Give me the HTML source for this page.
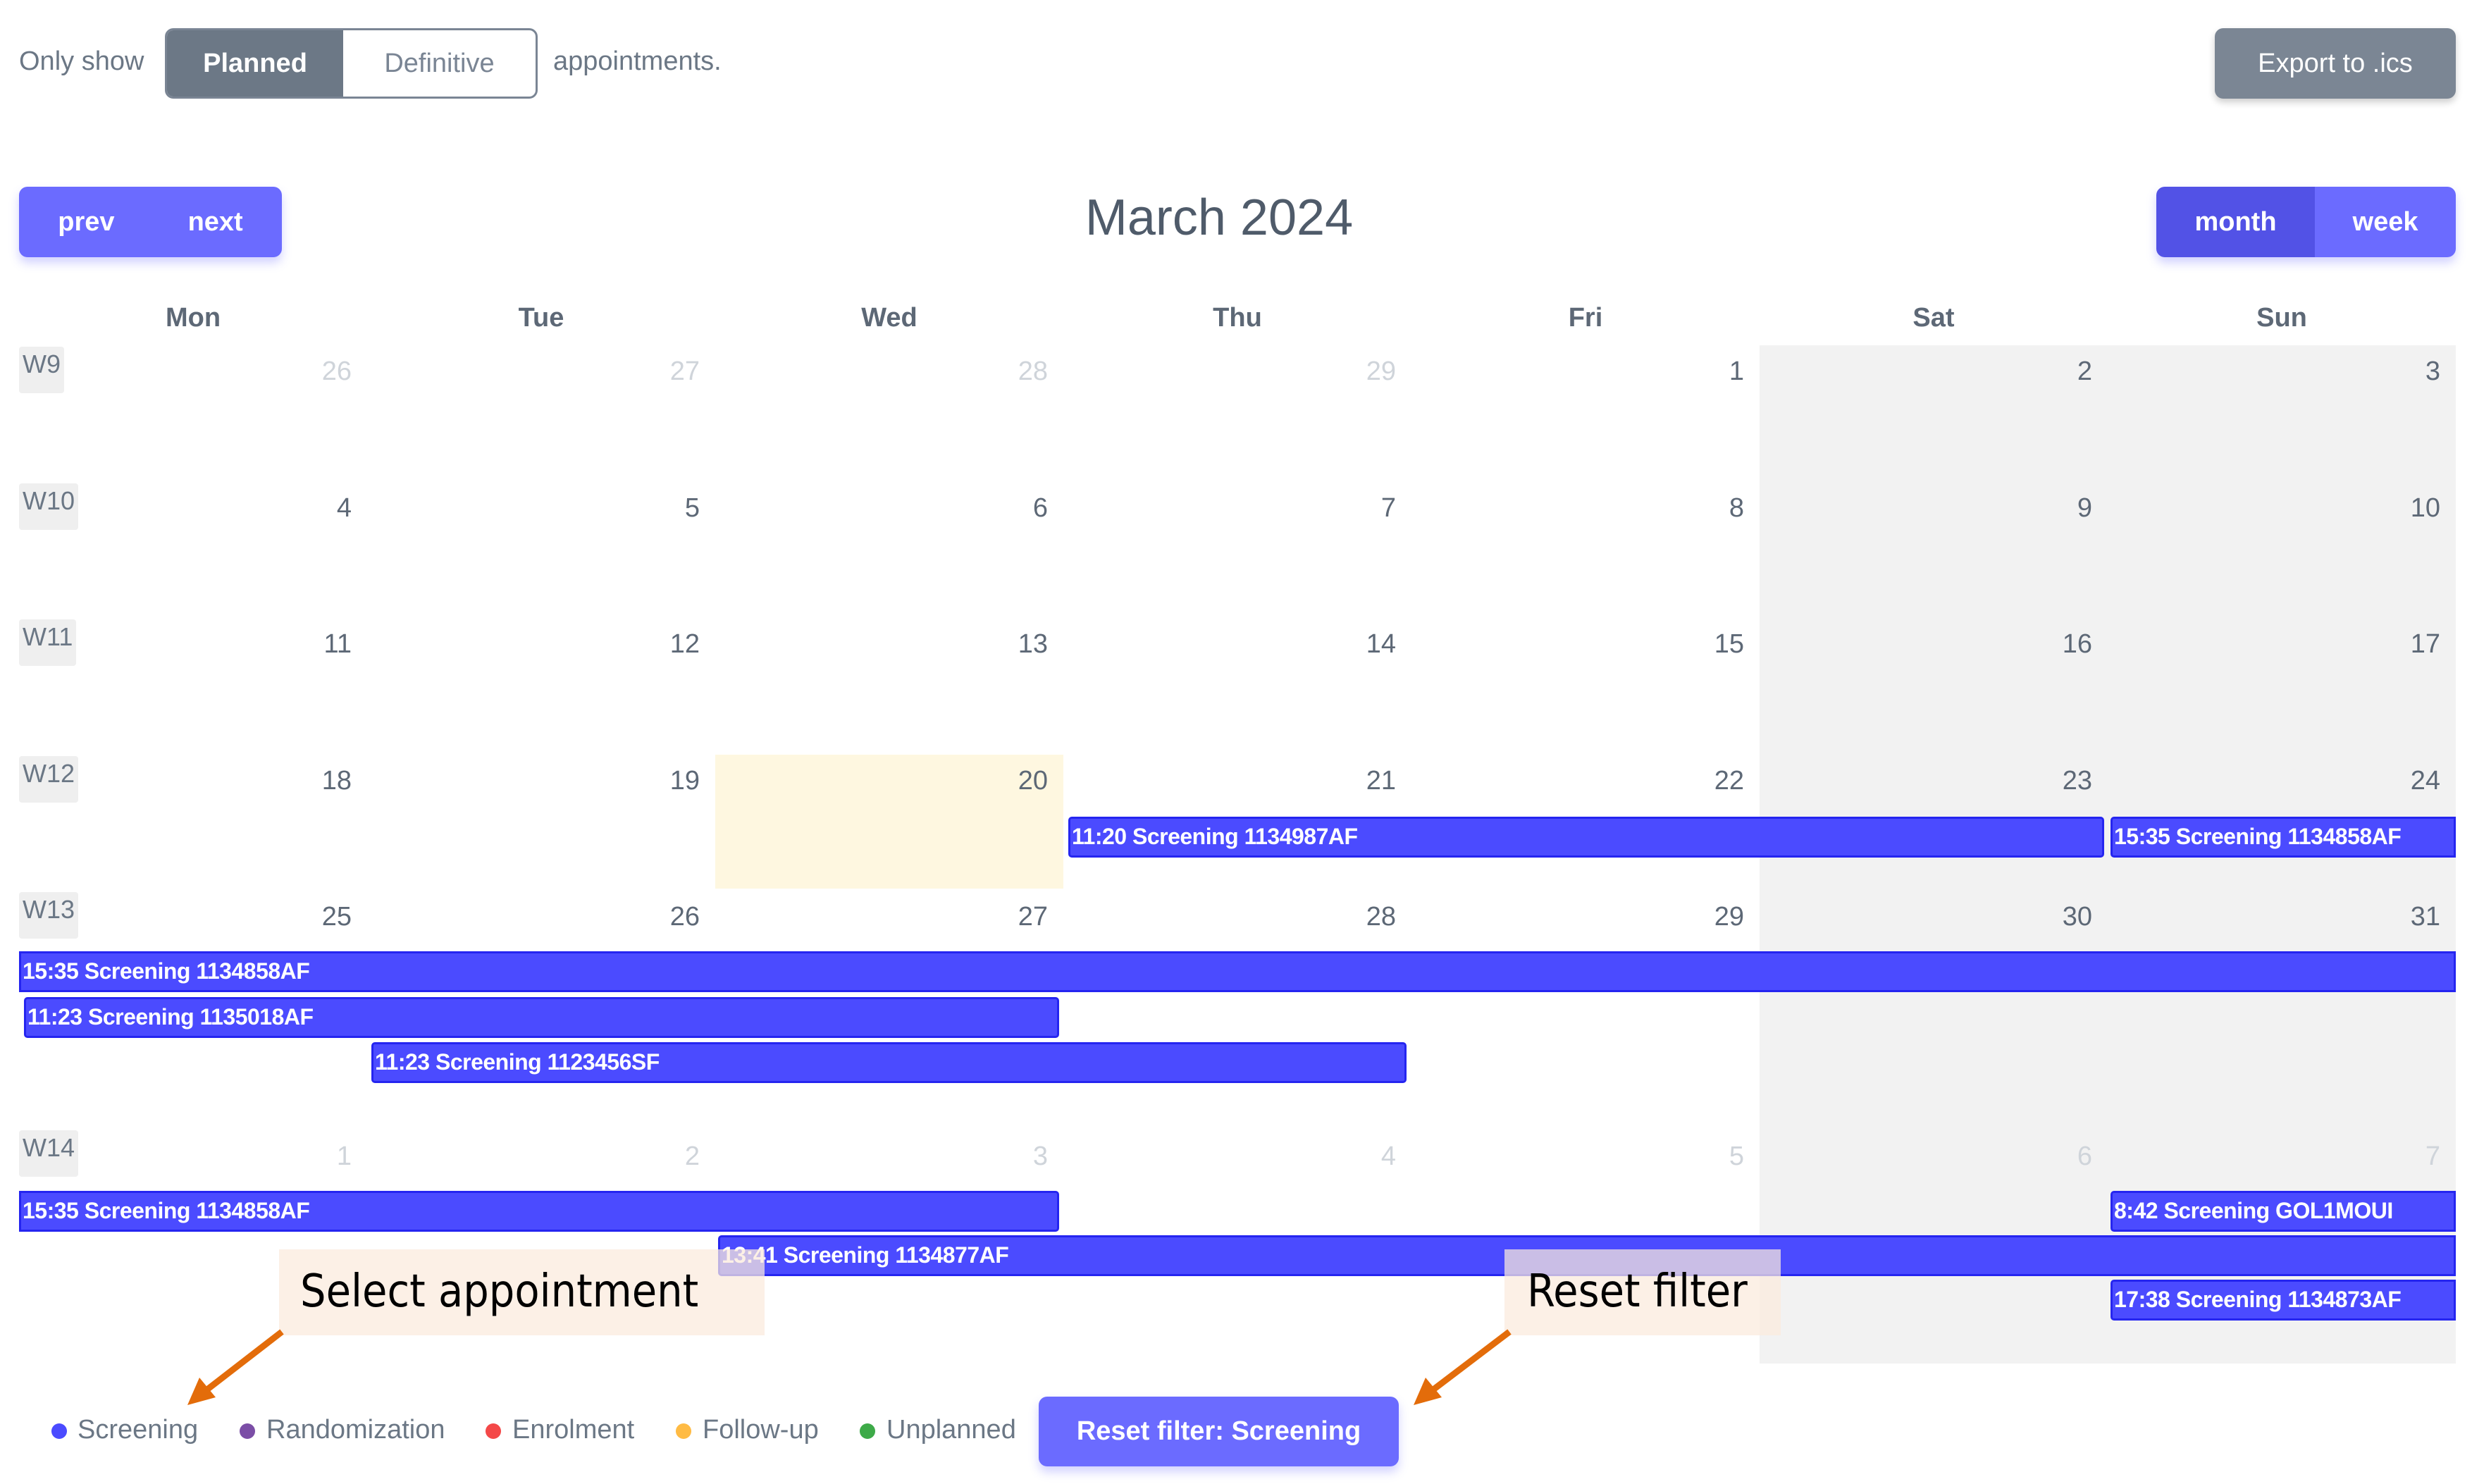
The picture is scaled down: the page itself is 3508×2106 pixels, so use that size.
<!DOCTYPE html>
<html><head><meta charset="utf-8"><style>
*{margin:0;padding:0;box-sizing:border-box}
body{width:3508px;height:2106px;background:#fff;position:relative;overflow:hidden;font-family:"Liberation Sans",sans-serif;color:#6b7785}
.a{position:absolute}
.t{font-size:38px;white-space:nowrap}
.btn{position:absolute;color:#fff;font-size:38px;font-weight:bold;display:flex;align-items:center;justify-content:center;border-radius:12px}
.dh{position:absolute;top:430px;width:494px;text-align:center;font-size:38px;font-weight:bold;color:#5d6876}
.wk{position:absolute;left:27px;height:66px;background:#efefef;font-size:36px;color:#6b7785;padding:4px 5px;border-radius:4px}
.dn{position:absolute;width:472px;text-align:right;font-size:38px;color:#5d6876}
.dn.o{color:#cfd4da}
.ev{position:absolute;height:58px;background:#4b4bff;border:3px solid #2525f0;border-radius:5px;color:#fff;font-size:32px;font-weight:bold;line-height:50px;padding-left:2px;white-space:nowrap;overflow:hidden;letter-spacing:-0.5px}
.ev b{font-weight:900}
.dot{position:absolute;width:22px;height:22px;border-radius:50%;top:2020px}
.lg{position:absolute;top:2008px;font-size:38px;color:#6b7785}
.note{position:absolute;background:rgba(251,234,221,0.72);color:#000;font-size:64px;font-family:"DejaVu Sans Condensed","Liberation Sans Narrow","Liberation Sans",sans-serif;padding-left:30px;line-height:120px}
</style></head><body>
<div class="a t" style="left:27px;top:66px">Only show</div>
<div class="a" style="left:234px;top:40px;width:529px;height:100px;border:3px solid #7a8594;border-radius:12px;overflow:hidden">
 <div class="a" style="left:0;top:0;width:250px;height:100%;background:#6c7886;color:#fff;font-size:38px;font-weight:bold;display:flex;align-items:center;justify-content:center">Planned</div>
 <div class="a" style="left:250px;top:0;right:0;height:100%;color:#7a8594;font-size:38px;display:flex;align-items:center;justify-content:center">Definitive</div>
</div>
<div class="a t" style="left:785px;top:66px">appointments.</div>
<div class="btn" style="left:3143px;top:40px;width:342px;height:100px;background:#7b8694;box-shadow:0 5px 10px rgba(0,0,0,.2);font-weight:normal">Export to .ics</div>

<div class="btn" style="left:27px;top:265px;width:373px;height:100px;background:#6b6bff;box-shadow:0 8px 14px rgba(107,107,255,.3)"><span style="margin-right:104px">prev</span><span>next</span></div>
<div class="a" style="left:1330px;top:268px;width:800px;text-align:center;font-size:72px;color:#4f5b6a">March 2024</div>
<div class="a" style="left:3060px;top:265px;width:425px;height:100px;border-radius:12px;overflow:hidden;box-shadow:0 8px 14px rgba(107,107,255,.3)">
 <div class="btn" style="left:0;top:0;width:225px;height:100px;background:#5252e6;border-radius:0">month</div>
 <div class="btn" style="left:225px;top:0;width:200px;height:100px;background:#6b6bff;border-radius:0">week</div>
</div>

<div class="dh" style="left:27px">Mon</div><div class="dh" style="left:521px">Tue</div><div class="dh" style="left:1015px">Wed</div><div class="dh" style="left:1509px">Thu</div><div class="dh" style="left:2003px">Fri</div><div class="dh" style="left:2497px">Sat</div><div class="dh" style="left:2991px">Sun</div>

<div class="a" style="left:2497px;top:490px;width:988px;height:1445px;background:#f2f2f2"></div>
<div class="a" style="left:1015px;top:1071px;width:494px;height:190px;background:#fef7e0"></div>

<div class="wk" style="top:492px">W9</div>
<div class="wk" style="top:686px">W10</div>
<div class="wk" style="top:879px">W11</div>
<div class="wk" style="top:1073px">W12</div>
<div class="wk" style="top:1266px">W13</div>
<div class="wk" style="top:1604px">W14</div>

<div class="dn o" style="left:27px;top:506px">26</div><div class="dn o" style="left:521px;top:506px">27</div><div class="dn o" style="left:1015px;top:506px">28</div><div class="dn o" style="left:1509px;top:506px">29</div><div class="dn" style="left:2003px;top:506px">1</div><div class="dn" style="left:2497px;top:506px">2</div><div class="dn" style="left:2991px;top:506px">3</div>
<div class="dn" style="left:27px;top:700px">4</div><div class="dn" style="left:521px;top:700px">5</div><div class="dn" style="left:1015px;top:700px">6</div><div class="dn" style="left:1509px;top:700px">7</div><div class="dn" style="left:2003px;top:700px">8</div><div class="dn" style="left:2497px;top:700px">9</div><div class="dn" style="left:2991px;top:700px">10</div>
<div class="dn" style="left:27px;top:893px">11</div><div class="dn" style="left:521px;top:893px">12</div><div class="dn" style="left:1015px;top:893px">13</div><div class="dn" style="left:1509px;top:893px">14</div><div class="dn" style="left:2003px;top:893px">15</div><div class="dn" style="left:2497px;top:893px">16</div><div class="dn" style="left:2991px;top:893px">17</div>
<div class="dn" style="left:27px;top:1087px">18</div><div class="dn" style="left:521px;top:1087px">19</div><div class="dn" style="left:1015px;top:1087px">20</div><div class="dn" style="left:1509px;top:1087px">21</div><div class="dn" style="left:2003px;top:1087px">22</div><div class="dn" style="left:2497px;top:1087px">23</div><div class="dn" style="left:2991px;top:1087px">24</div>
<div class="dn" style="left:27px;top:1280px">25</div><div class="dn" style="left:521px;top:1280px">26</div><div class="dn" style="left:1015px;top:1280px">27</div><div class="dn" style="left:1509px;top:1280px">28</div><div class="dn" style="left:2003px;top:1280px">29</div><div class="dn" style="left:2497px;top:1280px">30</div><div class="dn" style="left:2991px;top:1280px">31</div>
<div class="dn o" style="left:27px;top:1620px">1</div><div class="dn o" style="left:521px;top:1620px">2</div><div class="dn o" style="left:1015px;top:1620px">3</div><div class="dn o" style="left:1509px;top:1620px">4</div><div class="dn o" style="left:2003px;top:1620px">5</div><div class="dn o" style="left:2497px;top:1620px">6</div><div class="dn o" style="left:2991px;top:1620px">7</div>

<div class="ev" style="left:1516px;top:1159px;width:1470px"><b>11:20</b> Screening 1134987AF</div>
<div class="ev" style="left:2995px;top:1159px;width:490px;border-radius:5px 0 0 5px"><b>15:35</b> Screening 1134858AF</div>
<div class="ev" style="left:27px;top:1350px;width:3458px;border-radius:0"><b>15:35</b> Screening 1134858AF</div>
<div class="ev" style="left:34px;top:1415px;width:1469px"><b>11:23</b> Screening 1135018AF</div>
<div class="ev" style="left:527px;top:1479px;width:1469px"><b>11:23</b> Screening 1123456SF</div>
<div class="ev" style="left:27px;top:1690px;width:1476px;border-radius:0 5px 5px 0"><b>15:35</b> Screening 1134858AF</div>
<div class="ev" style="left:2995px;top:1690px;width:490px;border-radius:5px 0 0 5px"><b>8:42</b> Screening GOL1MOUI</div>
<div class="ev" style="left:1019px;top:1753px;width:2466px;border-radius:5px 0 0 5px"><b>13:41</b> Screening 1134877AF</div>
<div class="ev" style="left:2995px;top:1816px;width:490px;border-radius:5px 0 0 5px"><b>17:38</b> Screening 1134873AF</div>

<div class="note" style="left:396px;top:1773px;width:689px;height:122px">Select appointment</div>
<div class="note" style="left:2135px;top:1773px;width:392px;height:122px;padding-left:32px">Reset filter</div>

<svg class="a" style="left:0;top:0" width="3508" height="2106">
<line x1="400" y1="1890" x2="290" y2="1975" stroke="#e36c0a" stroke-width="9"/>
<polygon points="266,1994 283,1955 306,1983" fill="#e36c0a"/>
<line x1="2142" y1="1890" x2="2030" y2="1975" stroke="#e36c0a" stroke-width="9"/>
<polygon points="2006,1994 2023,1955 2046,1983" fill="#e36c0a"/>
</svg>

<div class="dot" style="left:73px;background:#4b4bff"></div><div class="lg" style="left:110px">Screening</div>
<div class="dot" style="left:340px;background:#7b4ea6"></div><div class="lg" style="left:378px">Randomization</div>
<div class="dot" style="left:689px;background:#f44848"></div><div class="lg" style="left:727px">Enrolment</div>
<div class="dot" style="left:959px;background:#ffbb44"></div><div class="lg" style="left:997px">Follow-up</div>
<div class="dot" style="left:1220px;background:#3daa48"></div><div class="lg" style="left:1258px">Unplanned</div>
<div class="btn" style="left:1474px;top:1982px;width:511px;height:99px;background:#6b6bff;box-shadow:0 8px 14px rgba(107,107,255,.3)">Reset filter: Screening</div>
</body></html>
